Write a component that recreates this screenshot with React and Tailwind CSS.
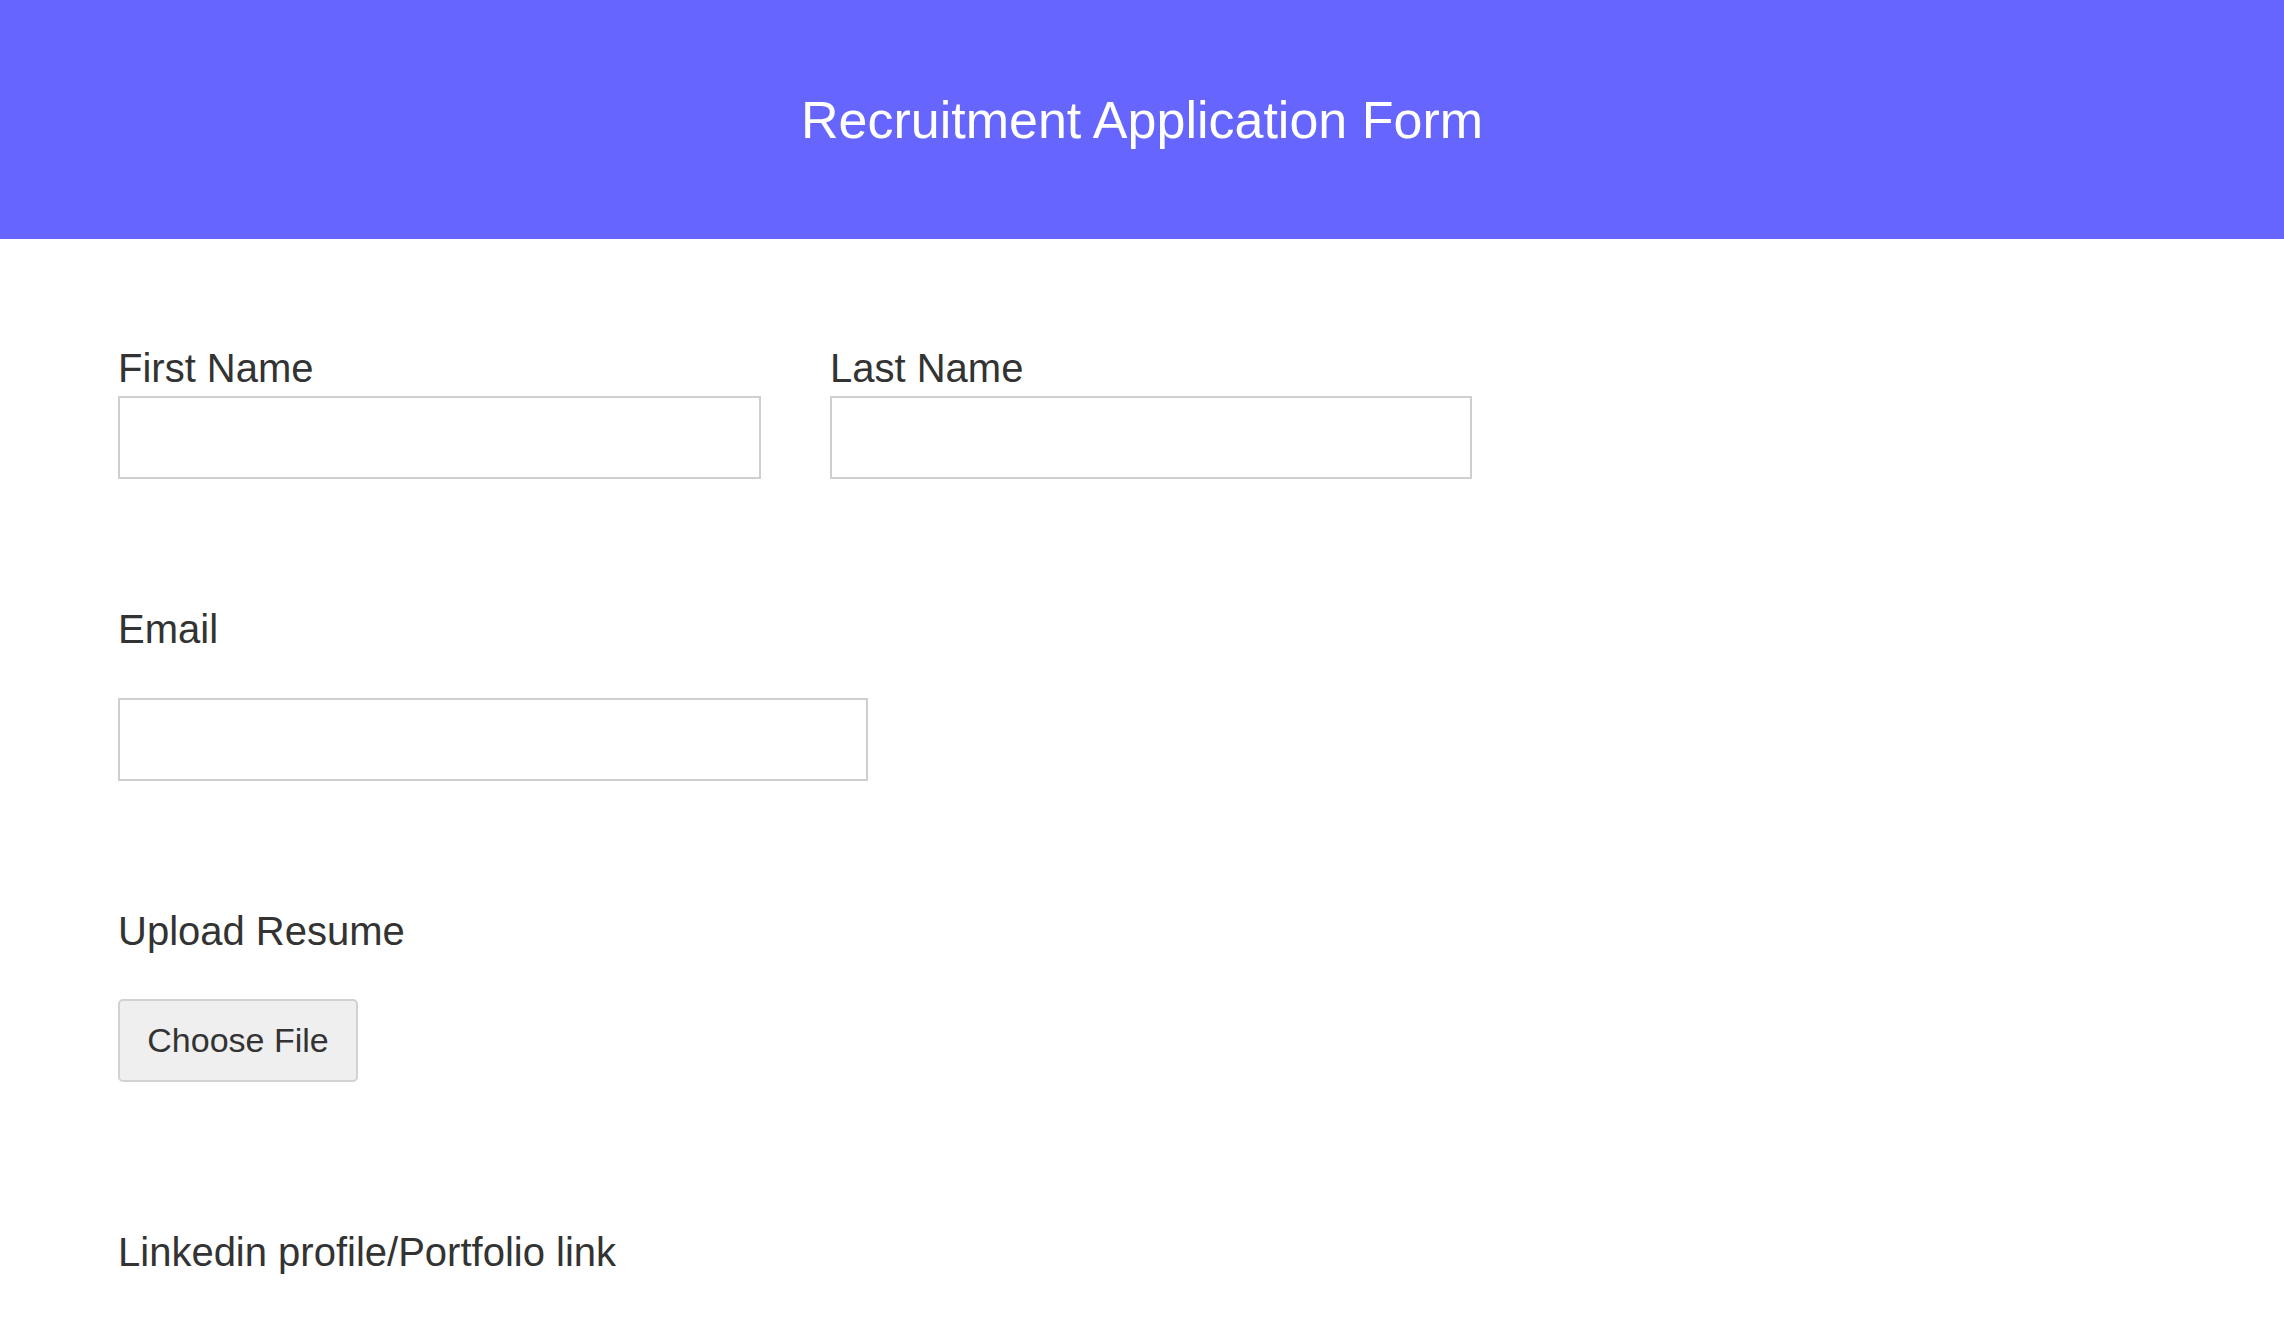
import React from 'react';

const font = { fontFamily: '"Liberation Sans", Arial, Helvetica, sans-serif' };

function Field({ label, width = 'w-[643px]' }) {
  return (
    <div className="flex flex-col">
      <label className="text-[40px] leading-[40px] text-[#333333]">{label}</label>
      <input
        type="text"
        className={`mt-[8px] h-[83px] ${width} border-2 border-[#cfcfcf] bg-white outline-none`}
      />
    </div>
  );
}

export default function App() {
  return (
    <div className="min-h-[1319px] bg-white" style={font}>
      {/* Header */}
      <header className="h-[239px] bg-[#6666ff] flex items-center justify-center">
        <h1 className="text-[52px] leading-none text-white font-normal">Recruitment Application Form</h1>
      </header>

      <form className="pl-[118px] pt-[109px]">
        {/* Name row */}
        <div className="flex gap-[69px]">
          <Field label="First Name" />
          <Field label="Last Name" width="w-[642px]" />
        </div>

        {/* Email */}
        <div className="mt-[130px] flex flex-col">
          <label className="text-[40px] leading-[40px] text-[#333333]">Email</label>
          <input
            type="email"
            className="mt-[49px] h-[83px] w-[750px] border-2 border-[#cfcfcf] bg-white outline-none"
          />
        </div>

        {/* Resume */}
        <div className="mt-[130px] flex flex-col items-start">
          <label className="text-[40px] leading-[40px] text-[#333333]">Upload Resume</label>
          <button
            type="button"
            className="mt-[48px] h-[83px] w-[240px] rounded-[5px] border-2 border-[#d2d2d2] bg-[#efefef] text-[34px] text-[#333333]"
          >
            Choose File
          </button>
        </div>

        {/* Links */}
        <div className="mt-[150px]">
          <label className="text-[40px] leading-[40px] text-[#333333]">Linkedin profile/Portfolio link</label>
        </div>
      </form>
    </div>
  );
}
